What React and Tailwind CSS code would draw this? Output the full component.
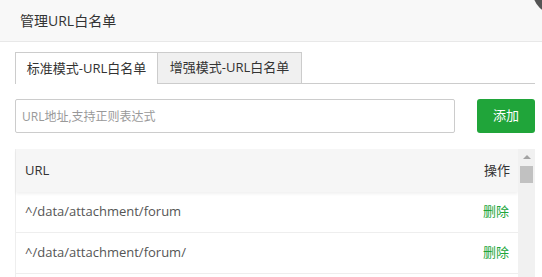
import React from "react";

const font = { fontFamily: '"Open Sans", "Noto Sans CJK SC", sans-serif' };

const rows = ["^/data/attachment/forum", "^/data/attachment/forum/"];

const App = () => {
    return (
        <div className="relative w-[542px] h-[277px] overflow-hidden bg-white text-[#333]" style={font}>
            {/* close button peeking in from the corner */}
            <div className="absolute left-[533px] top-[-30px] w-[44px] h-[44px] rounded-full bg-[#555555]"></div>

            <div className="h-[42px] flex items-center pl-[20px] bg-[#f8f8f8] border-b border-[#e8e8e8] text-[14px]">
                管理URL白名单
            </div>

            <div className="pl-[15px] pr-[7px] pt-[10px]">
                <div className="flex h-[32px] border-b border-[#cccccc]">
                    <div className="w-[143px] h-[32px] flex items-center justify-center text-[13px] bg-white border border-b-0 border-[#cccccc]">
                        标准模式-URL白名单
                    </div>
                    <div className="w-[144px] h-[31px] flex items-center justify-center text-[13px] bg-[#f0f0f0] border border-l-0 border-b-0 border-[#cccccc]">
                        增强模式-URL白名单
                    </div>
                </div>

                <div className="flex items-center justify-between mt-[15px]">
                    <input
                        className="w-[440px] h-[34px] px-[6px] border border-[#cccccc] rounded-[2px] text-[12px] outline-none placeholder:text-[#999]"
                        placeholder="URL地址,支持正则表达式"
                        style={font}
                    />
                    <button className="w-[58px] h-[34px] rounded-[3px] bg-[#20a53a] text-white text-[13px]">
                        添加
                    </button>
                </div>

                <div className="flex mt-[16px]">
                    <div className="w-[503px] border-l border-[#eeeeee]">
                        <div className="h-[43px] flex items-center justify-between pl-[9px] pr-[8px] bg-[#f6f6f6] text-[13px] shadow-[0_2px_3px_rgba(0,0,0,0.06)]">
                            <span>URL</span>
                            <span>操作</span>
                        </div>
                        {rows.map((r) => (
                            <div
                                key={r}
                                className="h-[41px] flex items-center justify-between pl-[9px] pr-[9px] border-b border-[#eeeeee] text-[13px] text-[#555]"
                            >
                                <span>{r}</span>
                                <span className="text-[#20a53a]">删除</span>
                            </div>
                        ))}
                        <div className="h-[41px]"></div>
                    </div>
                    <div className="w-[17px] h-[200px] bg-[#f1f1f1] flex flex-col items-center pt-[6px]">
                        <div className="w-0 h-0 border-l-[4px] border-r-[4px] border-b-[4px] border-l-transparent border-r-transparent border-b-[#a3a3a3]"></div>
                        <div className="mt-[7px] w-[13px] h-[17px] bg-[#c1c1c1]"></div>
                    </div>
                </div>
            </div>
        </div>
    );
};

export default App;
